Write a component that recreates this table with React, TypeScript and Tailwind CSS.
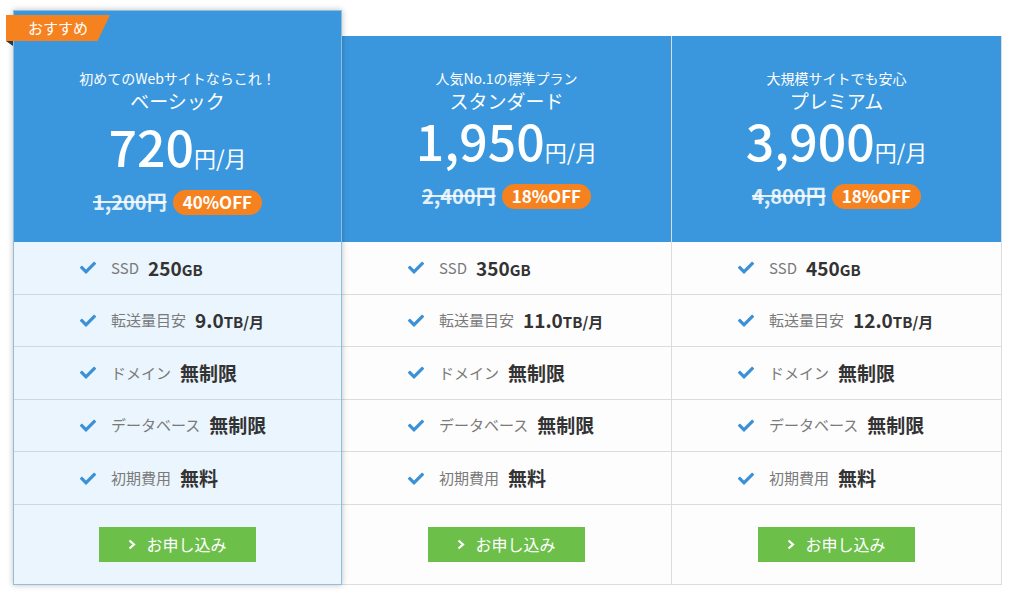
import React from "react";

type Plan = {
  sub: string;
  name: string;
  price: string;
  old: string;
  off: string;
  ssd: string;
  transfer: string;
  featured?: boolean;
};

const plans: Plan[] = [
  { sub: "初めてのWebサイトならこれ！", name: "ベーシック", price: "720", old: "1,200円", off: "40%OFF", ssd: "250", transfer: "9.0", featured: true },
  { sub: "人気No.1の標準プラン", name: "スタンダード", price: "1,950", old: "2,400円", off: "18%OFF", ssd: "350", transfer: "11.0" },
  { sub: "大規模サイトでも安心", name: "プレミアム", price: "3,900", old: "4,800円", off: "18%OFF", ssd: "450", transfer: "12.0" },
];

const Check = () => (
  <svg width="16" height="13" viewBox="0 0 512 400" className="shrink-0">
    <path
      fill="#3b90d6"
      d="M173.9 389.4 7.5 223c-10-10-10-26.2 0-36.2l36.2-36.2c10-10 26.2-10 36.2 0L192 262.7 432.1 22.6c10-10 26.2-10 36.2 0l36.2 36.2c10 10 10 26.2 0 36.2L210.1 389.4c-10 10-26.2 10-36.2 0z"
    />
  </svg>
);

function Row({ label, children, featured }: { label: string; children: React.ReactNode; featured?: boolean }) {
  return (
    <div className={`flex items-center h-[52.6px] border-b ${featured ? "border-[#cfd8de]" : "border-[#dcdcdc]"} pl-[66px]`}>
      <Check />
      <span className="ml-[15px] text-[15px] text-[#7a7a7a]">{label}</span>
      <span className="ml-[9px] text-[19px] font-bold text-[#333]">{children}</span>
    </div>
  );
}

function Card({ p }: { p: Plan }) {
  const f = p.featured;
  return (
    <div
      className={
        f
          ? "relative z-10 w-[329px] border border-[#8dbfe0] bg-[#eaf5fd] shadow-[0_0_6px_rgba(0,0,0,0.25)]"
          : "relative w-[330px] border-r border-b border-[#dcdcdc] bg-[#fdfdfd]"
      }
    >
      {f && (
        <>
          <div className="absolute left-[-8px] top-[4px] h-[26px] w-[104px] bg-[#f6821f] [clip-path:polygon(0_0,100%_0,88%_100%,0_100%)] flex items-center pl-[22px] text-[15px] text-white">
            おすすめ
          </div>
          <div className="absolute left-[-8px] top-[30px] h-[5px] w-[7px] bg-[#333] [clip-path:polygon(0_0,100%_0,100%_100%)]" />
        </>
      )}
      <div className={`bg-[#3a97dd] flex flex-col items-center text-white ${f ? "h-[231px] pt-[57px]" : "h-[206px] pt-[32px]"}`}>
        <div className="text-[14px] leading-[20px]">{p.sub}</div>
        <div className="text-[19px] leading-[26px]">{p.name}</div>
        <div className={`flex items-baseline ${f ? "mt-[6px]" : "mt-[0px]"}`}>
          <span className="inline-block text-[50px] leading-[50px] font-medium">{p.price}</span>
          <span className="inline-block text-[22px] leading-[26px]">円/月</span>
        </div>
        <div className={`flex items-center ${f ? "mt-[19px]" : "mt-[19px]"}`}>
          <span className="text-[20px] leading-[26px] font-bold line-through text-white/85">{p.old}</span>
          <span className="ml-[6px] h-[25px] px-[10px] rounded-full bg-[#f6821f] text-[17px] font-bold flex items-center">{p.off}</span>
        </div>
      </div>
      <Row label="SSD" featured={f}>
        {p.ssd}
        <span className="text-[15px]">GB</span>
      </Row>
      <Row label="転送量目安" featured={f}>
        {p.transfer}
        <span className="text-[15px]">TB/月</span>
      </Row>
      <Row label="ドメイン" featured={f}>無制限</Row>
      <Row label="データベース" featured={f}>無制限</Row>
      <Row label="初期費用" featured={f}>無料</Row>
      <div className="h-[79px] flex items-center justify-center">
        <button className="w-[157px] h-[35px] bg-[#6cc04a] text-white text-[16px] flex items-center justify-center gap-[10px]">
          <svg width="8" height="11" viewBox="0 0 8 11">
            <path d="M1.5 1.5 6 5.5 1.5 9.5" stroke="white" strokeWidth="2.2" fill="none" />
          </svg>
          <span>お申し込み</span>
        </button>
      </div>
    </div>
  );
}

export default function App() {
  return (
    <div className="w-[1024px] h-[599px] bg-white overflow-hidden" style={{ fontFamily: '"Noto Sans CJK JP", "Noto Sans", sans-serif' }}>
      <div className="flex items-end pl-[13px] pt-[10px]">
        {plans.map((p) => (
          <Card key={p.name} p={p} />
        ))}
      </div>
    </div>
  );
}
